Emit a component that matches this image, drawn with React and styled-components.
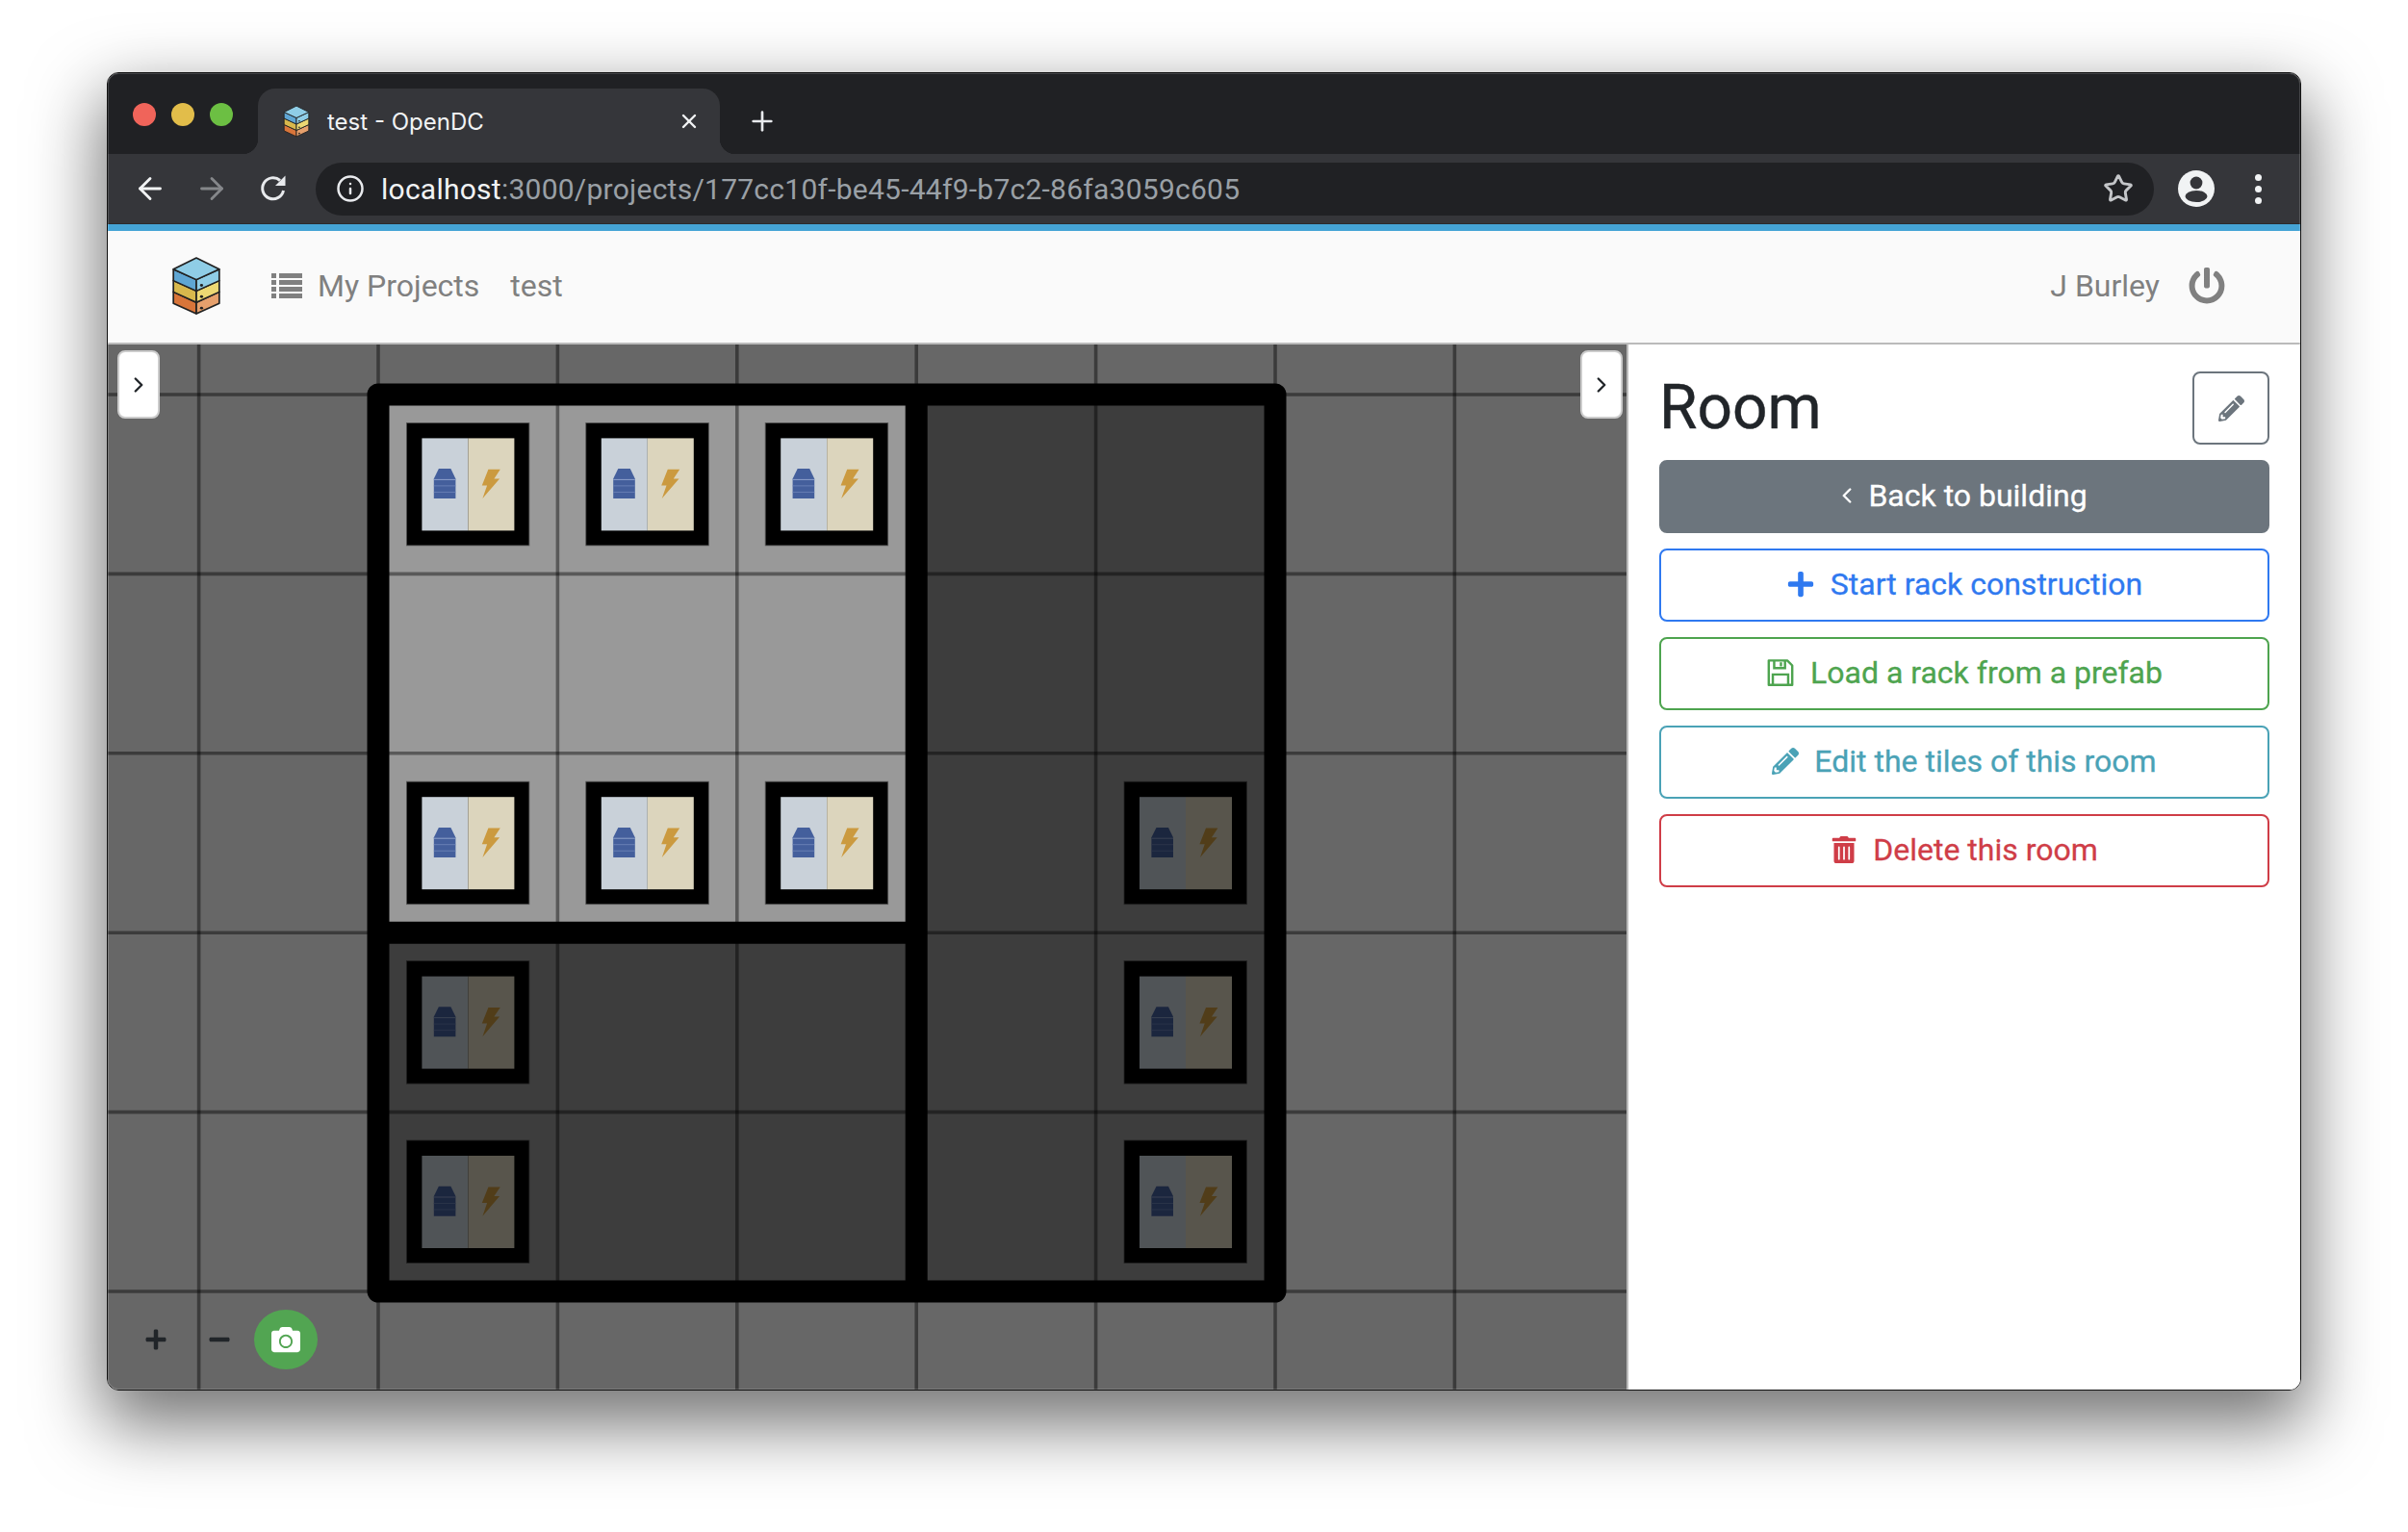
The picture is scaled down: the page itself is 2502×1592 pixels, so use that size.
import React from 'react'
import styled, { createGlobalStyle, css } from 'styled-components'
import { FaPowerOff, FaPencilAlt, FaPlus, FaTrashAlt, FaCamera, FaMinus } from 'react-icons/fa'
import { ArrowLeft, ArrowRight, ChevronLeft, ChevronRight, X, Plus, Info, Star } from 'lucide-react'

const GRID = 186.4
const X0 = 393
const Y0 = 410
const colX = n => X0 + n * GRID
const rowY = n => Y0 + n * GRID
const XS = [-2, -1, 0, 1, 2, 3, 4, 5, 6].map(colX)
const YS = [0, 1, 2, 3, 4, 5].map(rowY)

const RACKS = [[0, 0], [1, 0], [2, 0], [0, 2], [1, 2], [2, 2], [0, 3], [0, 4], [4, 2], [4, 3], [4, 4]]

const SaveIcon = ({ size }) => (
  <svg width={size} height={size} viewBox="0 0 30 32" fill="none" stroke="currentColor" strokeWidth="2.6">
    <path d="M2 2.5 H22.5 L28 8 V29.5 H2 Z" strokeLinejoin="round" />
    <path d="M8 3 V11 H20 V3" />
    <path d="M15.5 4.5 V9" />
    <path d="M6.5 29 V18 H23.5 V29" />
  </svg>
)

const ACTIONS = [
  { label: 'Start rack construction', tone: '#2f79f0', Icon: FaPlus, size: 30 },
  { label: 'Load a rack from a prefab', tone: '#4ea44f', Icon: SaveIcon, size: 30 },
  { label: 'Edit the tiles of this room', tone: '#4aa2b6', Icon: FaPencilAlt, size: 28 },
  { label: 'Delete this room', tone: '#cf3d47', Icon: FaTrashAlt, size: 28 },
]

const Logo = ({ className }) => (
  <svg className={className} viewBox="29 2 48 63" preserveAspectRatio="none">
    <g stroke="#222" strokeWidth="1.6" strokeLinejoin="round">
      <path d="M31 40 L53 51 V63 L31 52 Z" fill="#d9753a" />
      <path d="M75 40 L53 51 V63 L75 52 Z" fill="#e6a06c" />
      <path d="M31 28 L53 39 V51 L31 40 Z" fill="#d8b84c" />
      <path d="M75 28 L53 39 V51 L75 40 Z" fill="#ecd873" />
      <path d="M31 16 L53 27 V39 L31 28 Z" fill="#5fa6d3" />
      <path d="M75 16 L53 27 V39 L75 28 Z" fill="#8fcde6" />
      <path d="M53 4 L75 16 L53 27 L31 16 Z" fill="#8fcde6" />
    </g>
    <circle cx="58" cy="33" r="1.5" fill="#222" />
    <circle cx="58" cy="45" r="1.5" fill="#222" />
    <circle cx="58" cy="57" r="1.5" fill="#222" />
  </svg>
)

const ListIcon = () => (
  <svg width="32" height="26" viewBox="0 0 32 26" fill="currentColor">
    <path d="M0 0 H5 V5 H0 Z M8 0 H32 V5 H8 Z M0 7 H5 V12 H0 Z M8 7 H32 V12 H8 Z M0 14 H5 V19 H0 Z M8 14 H32 V19 H8 Z M0 21 H5 V26 H0 Z M8 21 H32 V26 H8 Z" />
  </svg>
)

const Rack = ({ x, y }) => (
  <g transform={`translate(${x + 29.4} ${y + 29.4})`}>
    <rect width="127.5" height="127.5" fill="#000" stroke="#555" strokeWidth="0.8" />
    <rect x="16" y="16" width="48" height="96" fill="#c9d1d9" />
    <rect x="64" y="16" width="48" height="96" fill="#dcd5bd" />
    <path d="M33.5 47.7 H46 L51 58 V78.7 H28.4 V58 Z" fill="#445f9c" />
    <path d="M28.4 59 H51" stroke="#8ea2cb" strokeWidth="1" />
    <path d="M28.4 65.5 H51 M28.4 72 H51" stroke="#7188ba" strokeWidth="0.8" />
    <polygon points="85,48.4 97.4,48.4 91,58 96.7,58 79,78.7 83.7,65 78.4,65" fill="#cb9a3f" />
  </g>
)

const FloorMap = () => (
  <MapDrawing viewBox="112 358 1578 1086">
    <rect x="112" y="358" width="1578" height="1086" fill="#676767" />
    <rect x={X0} y={Y0} width={5 * GRID} height={5 * GRID} fill="#999" />
    {RACKS.map(([c, r]) => <Rack key={`${c}-${r}`} x={colX(c)} y={rowY(r)} />)}
    <path d={`M${colX(3)} ${Y0} H${colX(5)} V${rowY(5)} H${X0} V${rowY(3)} H${colX(3)} Z`} fill="rgba(0,0,0,.6)" />
    <g stroke="rgba(0,0,0,.42)" strokeWidth="3.6">
      {XS.map(x => <line key={x} x1={x} x2={x} y1="358" y2="1444" />)}
      {YS.map(y => <line key={y} y1={y} y2={y} x1="112" x2="1690" />)}
    </g>
    <g fill="none" stroke="#000" strokeWidth="23" strokeLinejoin="round">
      <rect x={X0} y={Y0} width={5 * GRID} height={5 * GRID} />
      <path d={`M${colX(3)} ${Y0} V${rowY(5)} M${X0} ${rowY(3)} H${colX(3)}`} />
    </g>
  </MapDrawing>
)

export default function App() {
  return (
    <>
      <GlobalStyle />
      <Page>
        <BrowserWindow>
          <TabStrip>
            <Lights>
              <Light color="#f0645a" />
              <Light color="#e2bd4a" />
              <Light color="#6cbf43" />
            </Lights>
            <Tab>
              <Favicon />
              <TabTitle>test - OpenDC</TabTitle>
              <X size={24} color="#f1f3f4" strokeWidth={2.4} />
            </Tab>
            <NewTab><Plus size={32} strokeWidth={2} /></NewTab>
          </TabStrip>
          <Toolbar>
            <NavButton><ArrowLeft size={36} strokeWidth={1.9} /></NavButton>
            <NavButton $dim><ArrowRight size={36} strokeWidth={1.9} /></NavButton>
            <NavButton>
              <svg width="32" height="32" viewBox="0 0 32 32" fill="none">
                <path d="M26.5 18 A11 11 0 1 1 23 7.5" stroke="#e8eaed" strokeWidth="3" />
                <polygon points="18,13 28.5,13 28.5,2.5" fill="#e8eaed" />
              </svg>
            </NavButton>
            <AddressBar>
              <Info size={30} strokeWidth={2} color="#e8eaed" />
              <Url>localhost<UrlRest>:3000/projects/177cc10f-be45-44f9-b7c2-86fa3059c605</UrlRest></Url>
              <Star size={32} strokeWidth={2.2} color="#c4c6c9" />
            </AddressBar>
            <NavButton>
              <svg width="40" height="40" viewBox="0 0 40 40">
                <circle cx="20" cy="20" r="19" fill="#f1f3f4" />
                <circle cx="20" cy="14" r="6.4" fill="#35363a" />
                <ellipse cx="20" cy="28" rx="11.5" ry="6" fill="#35363a" />
              </svg>
            </NavButton>
            <NavButton>
              <Dots><span /><span /><span /></Dots>
            </NavButton>
          </Toolbar>
          <BlueBar />
          <Navbar>
            <BrandLogo />
            <NavLink>
              <ListIcon />
              My Projects
            </NavLink>
            <NavLink $tight>test</NavLink>
            <UserName>J Burley</UserName>
            <FaPowerOff size={38} />
          </Navbar>
          <Main>
            <Canvas>
              <FloorMap />
              <Toggle $side="left"><ChevronRight size={26} strokeWidth={2.2} /></Toggle>
              <Toggle $side="right"><ChevronRight size={26} strokeWidth={2.2} /></Toggle>
              <Controls>
                <FaPlus size={24} />
                <FaMinus size={24} />
                <CameraButton><FaCamera size={30} /></CameraButton>
              </Controls>
            </Canvas>
            <Sidebar>
              <TitleRow>
                <Title>Room</Title>
                <EditButton><FaPencilAlt size={27} /></EditButton>
              </TitleRow>
              <ActionButton $solid tone="#6c757d">
                <BackChevron size={26} strokeWidth={2.2} />
                Back to building
              </ActionButton>
              {ACTIONS.map(({ label, tone, Icon, size }) => (
                <ActionButton key={label} tone={tone}>
                  <Icon size={size} />
                  {label}
                </ActionButton>
              ))}
            </Sidebar>
          </Main>
        </BrowserWindow>
      </Page>
    </>
  )
}

const GlobalStyle = createGlobalStyle`
  html, body {
    margin: 0;
    background: #fff;
    font-family: Roboto, "Liberation Sans", sans-serif;
  }
  * { box-sizing: border-box; }
`

const Page = styled.div`
  width: 2502px;
  height: 1592px;
  padding: 75px 111px 147px;
  overflow: hidden;
`

const BrowserWindow = styled.div`
  position: relative;
  height: 100%;
  display: flex;
  flex-direction: column;
  border: 1px solid #111;
  border-radius: 12px;
  overflow: hidden;
  box-shadow: 0 30px 72px 6px rgba(0, 0, 0, 0.55);

  &::after {
    content: '';
    position: absolute;
    inset: 0;
    border-radius: 11px;
    box-shadow: inset 0 0 0 1px rgba(255, 255, 255, 0.16);
    pointer-events: none;
  }
`

const TabStrip = styled.div`
  height: 84px;
  flex: none;
  display: flex;
  align-items: flex-end;
  background: #202124;
  padding-left: 26px;
`

const Lights = styled.div`
  display: flex;
  gap: 16px;
  margin: 0 26px 29px 0;
`

const Light = styled.span`
  width: 24px;
  height: 24px;
  border-radius: 50%;
  background: ${p => p.color};
`

const Tab = styled.div`
  position: relative;
  width: 480px;
  height: 68px;
  display: flex;
  align-items: center;
  padding: 0 20px 0 26px;
  background: #35363a;
  border-radius: 18px 18px 0 0;

  &::before, &::after {
    content: '';
    position: absolute;
    bottom: 0;
    width: 16px;
    height: 16px;
  }
  &::before {
    left: -16px;
    background: radial-gradient(circle at 0 0, transparent 16px, #35363a 16.5px);
  }
  &::after {
    right: -16px;
    background: radial-gradient(circle at 100% 0, transparent 16px, #35363a 16.5px);
  }
`

const Favicon = styled(Logo)`
  width: 28px;
  height: 34px;
  flex: none;
`

const TabTitle = styled.span`
  flex: 1;
  margin-left: 18px;
  font: 400 24px Inter, Roboto, sans-serif;
  color: #f1f3f4;
`

const NewTab = styled.div`
  display: flex;
  margin: 0 0 18px 28px;
  color: #e8eaed;
`

const Toolbar = styled.div`
  height: 73px;
  flex: none;
  display: flex;
  align-items: center;
  padding: 0 12px;
  background: #35363a;
  border-bottom: 1px solid #2a2b2e;
`

const NavButton = styled.div`
  width: 64px;
  display: flex;
  justify-content: center;
  color: ${p => (p.$dim ? '#85878a' : '#f1f3f4')};
`

const AddressBar = styled.div`
  flex: 1;
  height: 55px;
  margin: 0 12px;
  padding: 0 21px 0 21px;
  display: flex;
  align-items: center;
  border-radius: 28px;
  background: #202124;
`

const Url = styled.div`
  flex: 1;
  margin-left: 17px;
  font: 400 30px Roboto, sans-serif;
  letter-spacing: 0.25px;
  color: #f1f3f4;
`

const UrlRest = styled.span`
  color: #9aa0a6;
`

const Dots = styled.div`
  display: flex;
  flex-direction: column;
  gap: 5px;

  span {
    width: 7px;
    height: 7px;
    border-radius: 50%;
    background: #f1f3f4;
  }
`

const BlueBar = styled.div`
  height: 7px;
  flex: none;
  background: #45a4d6;
`

const Navbar = styled.nav`
  height: 118px;
  flex: none;
  display: flex;
  align-items: center;
  padding: 0 78px 3px 66px;
  background: #fafafa;
  border-bottom: 2px solid #bbb;
  color: #808080;
  font-size: 32px;
`

const BrandLogo = styled(Logo)`
  width: 52px;
  height: 62px;
  margin-right: 52px;
`

const NavLink = styled.div`
  display: flex;
  align-items: center;
  gap: 16px;
  margin-left: ${p => (p.$tight ? '32px' : '0')};
`

const UserName = styled.div`
  margin: 0 30px 0 auto;
`

const Main = styled.main`
  flex: 1;
  min-height: 0;
  display: flex;
`

const Canvas = styled.div`
  position: relative;
  flex: 1;
  background: #676767;
`

const MapDrawing = styled.svg`
  display: block;
  width: 100%;
  height: 100%;
`

const Toggle = styled.div`
  position: absolute;
  top: 6px;
  ${p => (p.$side === 'left' ? css`left: 10px;` : css`right: 4px;`)}
  width: 44px;
  height: 71px;
  display: flex;
  align-items: center;
  justify-content: center;
  background: #fff;
  border: 2px solid #ccc;
  border-radius: 8px;
  color: #212529;
`

const Controls = styled.div`
  position: absolute;
  left: 38px;
  bottom: 21px;
  display: flex;
  align-items: center;
  gap: 42px;
  color: #212529;
`

const CameraButton = styled.div`
  width: 66px;
  height: 62px;
  margin-left: -18px;
  display: flex;
  align-items: center;
  justify-content: center;
  border-radius: 50%;
  background: #52a552;
  color: #fff;
`

const Sidebar = styled.aside`
  width: 700px;
  flex: none;
  display: flex;
  flex-direction: column;
  gap: 16px;
  padding: 28px 32px 0 32px;
  background: #fff;
  border-left: 2px solid #bbb;
`

const TitleRow = styled.div`
  display: flex;
  justify-content: space-between;
  align-items: flex-start;
`

const Title = styled.h2`
  margin: 0;
  font: 400 64px/76px Roboto, sans-serif;
  -webkit-text-stroke: 0.4px #212529;
  color: #212529;
`

const EditButton = styled.div`
  width: 80px;
  height: 76px;
  display: flex;
  align-items: center;
  justify-content: center;
  border: 2px solid #6c757d;
  border-radius: 8px;
  color: #6c757d;
`

const ActionButton = styled.div`
  height: 76px;
  display: flex;
  align-items: center;
  justify-content: center;
  gap: 16px;
  padding-bottom: 2px;
  border: 2px solid ${p => p.tone};
  border-radius: 8px;
  background: ${p => (p.$solid ? p.tone : '#fff')};
  color: ${p => (p.$solid ? '#fff' : p.tone)};
  font-size: 32px;
  -webkit-text-stroke: 0.3px currentColor;
`

const BackChevron = styled(ChevronLeft)`
  margin: 0 -7px;
`
